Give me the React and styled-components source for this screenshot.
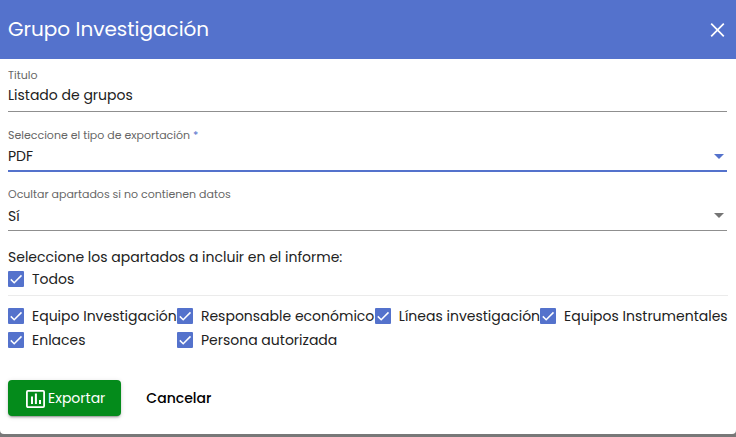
import React, { useState } from "react";
import styled, { createGlobalStyle } from "styled-components";

const blue = "#5472cc";

const GlobalStyle = createGlobalStyle`
  * { box-sizing: border-box; }
  body {
    margin: 0;
    background: #787878;
    color: #212121;
    font-family: Poppins, Inter, sans-serif;
    font-size: 14px;
  }
  button, input, select { font: inherit; color: inherit; }
`;

const Dialog = styled.form`
  background: #fff;
  border-radius: 0 0 4px 4px;
  margin-bottom: 3px;
`;

const Header = styled.header`
  display: flex;
  align-items: center;
  justify-content: space-between;
  height: 59px;
  padding: 0 8px;
  background: ${blue};
  color: #fff;
`;

const Title = styled.h1`
  margin: 0;
  font-size: 20px;
  line-height: 31px;
  font-weight: 400;
`;

const CloseButton = styled.button`
  display: flex;
  padding: 0;
  border: 0;
  background: none;
  cursor: pointer;
`;

const Content = styled.div`
  padding: 9px 8px 18px;
`;

const Fields = styled.div`
  display: flex;
  flex-direction: column;
  gap: 16px;
  margin-right: 1px;
`;

const Field = styled.div`
  display: flex;
  flex-direction: column;
  border-bottom: ${(p) => (p.$active ? `2px solid ${blue}` : "1px solid #8f8f8f")};
  margin-bottom: ${(p) => (p.$active ? "-1px" : "0")};
`;

const Label = styled.label`
  font-size: 11px;
  line-height: 14px;
  color: #666;
`;

const Required = styled.span`
  color: ${blue};
`;

const TextInput = styled.input`
  width: 100%;
  height: 29px;
  padding: 0 0 3px;
  border: 0;
  outline: 0;
  background: none;
`;

const SelectBox = styled.div`
  display: grid;
  align-items: center;

  & > * { grid-area: 1 / 1; }
`;

const Select = styled.select`
  width: 100%;
  height: ${(p) => (p.$active ? "28px" : "29px")};
  padding: 0 24px 0 0;
  border: 0;
  outline: 0;
  appearance: none;
  background: none;
`;

const Caret = styled.svg`
  justify-self: end;
  margin-right: 3px;
  fill: ${(p) => (p.$active ? blue : "#757575")};
  pointer-events: none;
`;

const Sections = styled.fieldset`
  min-width: 0;
  margin: 16px 0 0;
  padding: 0;
  border: 0;
`;

const Legend = styled.legend`
  padding: 0;
  line-height: 20px;
`;

const Divider = styled.hr`
  height: 1px;
  margin: 4px 0 8px;
  border: 0;
  background: #ebebeb;
`;

const Options = styled.div`
  display: grid;
  grid-template-columns: 169fr 198fr 165fr 188fr;
`;

const CheckLabel = styled.label`
  display: grid;
  grid-template-columns: 16px auto;
  justify-content: start;
  align-items: center;
  column-gap: 8px;
  height: 24px;
  white-space: nowrap;
  cursor: pointer;
`;

const CheckInput = styled.input`
  grid-area: 1 / 1;
  appearance: none;
  width: 16px;
  height: 16px;
  margin: 0;
  border: 2px solid #757575;
  border-radius: 1px;

  &:checked { background: ${blue}; border-color: ${blue}; }
`;

const CheckMark = styled.svg`
  grid-area: 1 / 1;
  pointer-events: none;
`;

const Actions = styled.div`
  display: flex;
  gap: 9px;
  margin-top: 28px;
`;

const Button = styled.button`
  display: flex;
  align-items: center;
  height: 36px;
  padding: 0 16px;
  border: 0;
  border-radius: 4px;
  cursor: pointer;
  background: ${(p) => (p.$primary ? "#048b1b" : "none")};
  color: ${(p) => (p.$primary ? "#fff" : "#000")};
  font-weight: ${(p) => (p.$primary ? 400 : 500)};
  box-shadow: ${(p) =>
    p.$primary ? "0 3px 1px -2px #0003, 0 2px 2px #0002, 0 1px 5px #0002" : "none"};
`;

function SelectField({ id, label, required, active, options }) {
  return (
    <Field $active={active}>
      <Label htmlFor={id}>
        {label}
        {required && <Required> *</Required>}
      </Label>
      <SelectBox>
        <Select id={id} required={required} $active={active}>
          {options.map((o) => (
            <option key={o}>{o}</option>
          ))}
        </Select>
        <Caret $active={active} width="10" height="5" viewBox="0 0 10 5" aria-hidden="true">
          <path d="M0 0h10L5 5z" />
        </Caret>
      </SelectBox>
    </Field>
  );
}

function Check({ label, checked, onChange }) {
  return (
    <CheckLabel>
      <CheckInput type="checkbox" checked={checked} onChange={onChange} />
      <CheckMark width="16" height="16" viewBox="0 0 16 16" fill="none" aria-hidden="true">
        <path d="M2.8 8.4l3.4 3.3 7.3-7.3" stroke="#fff" strokeWidth="1.5" />
      </CheckMark>
      <span>{label}</span>
    </CheckLabel>
  );
}

const names = [
  "Equipo Investigación",
  "Responsable económico",
  "Líneas investigación",
  "Equipos Instrumentales",
  "Enlaces",
  "Persona autorizada",
];

export default function App() {
  const [selected, setSelected] = useState(names);
  const all = selected.length === names.length;
  const toggle = (n) =>
    setSelected((s) => (s.includes(n) ? s.filter((x) => x !== n) : [...s, n]));

  return (
    <>
      <GlobalStyle />
      <Dialog onSubmit={(e) => e.preventDefault()}>
        <Header>
          <Title>Grupo Investigación</Title>
          <CloseButton type="button" aria-label="Cerrar">
            <svg width="20" height="21" viewBox="0 0 20 21" fill="none" aria-hidden="true">
              <path d="M3.200 4.700l12.600 12.600m0-12.600l-12.600 12.600" stroke="#fff" strokeWidth="1.7" />
            </svg>
          </CloseButton>
        </Header>
        <Content>
          <Fields>
            <Field>
              <Label htmlFor="titulo">Titulo</Label>
              <TextInput id="titulo" defaultValue="Listado de grupos" />
            </Field>
            <SelectField
              id="tipo"
              label="Seleccione el tipo de exportación"
              required
              active
              options={["PDF", "Excel"]}
            />
            <SelectField
              id="ocultar"
              label="Ocultar apartados si no contienen datos"
              options={["Sí", "No"]}
            />
          </Fields>
          <Sections>
            <Legend>Seleccione los apartados a incluir en el informe:</Legend>
            <Check label="Todos" checked={all} onChange={() => setSelected(all ? [] : names)} />
            <Divider />
            <Options>
              {names.map((n) => (
                <Check
                  key={n}
                  label={n}
                  checked={selected.includes(n)}
                  onChange={() => toggle(n)}
                />
              ))}
            </Options>
          </Sections>
          <Actions>
            <Button type="submit" $primary>
              <svg width="24" height="24" viewBox="0 0 24 24" fill="none" aria-hidden="true">
                <rect x="2.900" y="4.900" width="17.200" height="16.200" rx="1" stroke="#fff" strokeWidth="1.8" />
                <path d="M7 10.500h2V18H7zM10.900 7.500h2V18h-2zM15 14h2v4h-2z" fill="#fff" />
              </svg>
              Exportar
            </Button>
            <Button type="button">Cancelar</Button>
          </Actions>
        </Content>
      </Dialog>
    </>
  );
}
